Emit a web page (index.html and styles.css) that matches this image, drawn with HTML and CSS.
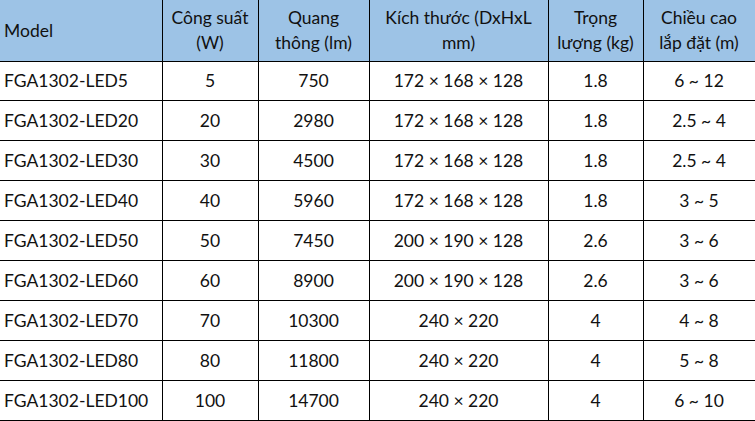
FILE: index.html
```html
<!DOCTYPE html>
<html>
<head>
<meta charset="utf-8">
<link rel="stylesheet" href="styles.css">
</head>
<body>
<table class="spec">
<colgroup>
<col class="c1"><col class="c2"><col class="c3"><col class="c4"><col class="c5"><col class="c6">
</colgroup>
<thead>
<tr>
<th class="left">Model</th>
<th>Công suất<br>(W)</th>
<th>Quang<br>thông (lm)</th>
<th>Kích thước (DxHxL<br>mm)</th>
<th>Trọng<br>lượng (kg)</th>
<th>Chiều cao<br>lắp đặt (m)</th>
</tr>
</thead>
<tbody>
<tr class="first"><td class="left">FGA1302-LED5</td><td>5</td><td>750</td><td>172 × 168 × 128</td><td>1.8</td><td>6 ~ 12</td></tr>
<tr><td class="left">FGA1302-LED20</td><td>20</td><td>2980</td><td>172 × 168 × 128</td><td>1.8</td><td>2.5 ~ 4</td></tr>
<tr><td class="left">FGA1302-LED30</td><td>30</td><td>4500</td><td>172 × 168 × 128</td><td>1.8</td><td>2.5 ~ 4</td></tr>
<tr><td class="left">FGA1302-LED40</td><td>40</td><td>5960</td><td>172 × 168 × 128</td><td>1.8</td><td>3 ~ 5</td></tr>
<tr><td class="left">FGA1302-LED50</td><td>50</td><td>7450</td><td>200 × 190 × 128</td><td>2.6</td><td>3 ~ 6</td></tr>
<tr><td class="left">FGA1302-LED60</td><td>60</td><td>8900</td><td>200 × 190 × 128</td><td>2.6</td><td>3 ~ 6</td></tr>
<tr><td class="left">FGA1302-LED70</td><td>70</td><td>10300</td><td>240 × 220</td><td>4</td><td>4 ~ 8</td></tr>
<tr><td class="left">FGA1302-LED80</td><td>80</td><td>11800</td><td>240 × 220</td><td>4</td><td>5 ~ 8</td></tr>
<tr><td class="left">FGA1302-LED100</td><td>100</td><td>14700</td><td>240 × 220</td><td>4</td><td>6 ~ 10</td></tr>
</tbody>
</table>
</body>
</html>
```
FILE: styles.css
```css
html, body {
  margin: 0;
  padding: 0;
  background: #ffffff;
}
.spec {
  border-collapse: collapse;
  table-layout: fixed;
  width: 755px;
  font-family: Lato, "Liberation Sans", sans-serif;
  font-size: 17.5px;
  color: #111;
}
.c1 { width: 162px; }
.c2 { width: 96px; }
.c3 { width: 111px; }
.c4 { width: 179px; }
.c5 { width: 95px; }
.c6 { width: 112px; }
.spec th, .spec td {
  border: 1px solid #000;
  text-align: center;
  vertical-align: middle;
  padding: 0 1px;
  white-space: nowrap;
}
.spec th {
  background: #9dc3e6;
  font-weight: normal;
  height: 60.5px;
  line-height: 25px;
  border-top: none;
}
.spec td {
  height: 39px;
}
.spec tr.first td {
  height: 38px;
}
.spec th.left, .spec td.left {
  text-align: left;
  padding-left: 4px;
  border-left: none;
}
```
